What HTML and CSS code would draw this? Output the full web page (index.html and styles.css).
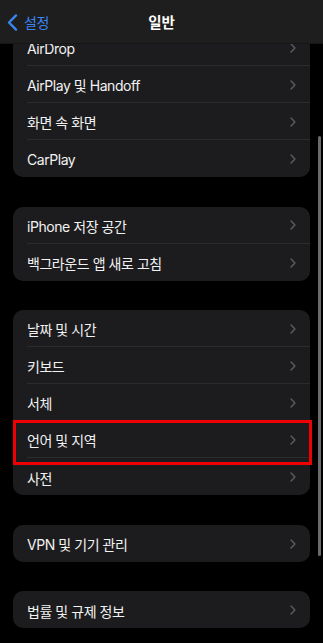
FILE: index.html
```html
<!DOCTYPE html>
<html lang="ko">
<head>
<meta charset="utf-8">
<title>일반</title>
<link rel="stylesheet" href="styles.css">
</head>
<body>
<div class="screen">
  <main class="content">
    <section class="group">
      <div class="row"><div class="row-inner"><span class="label">AirDrop</span><svg class="chev" viewBox="0 0 7 12"><path d="M1.2 1.2 5.8 6 1.2 10.8"/></svg></div></div>
      <div class="row"><div class="row-inner"><span class="label">AirPlay 및 Handoff</span><svg class="chev" viewBox="0 0 7 12"><path d="M1.2 1.2 5.8 6 1.2 10.8"/></svg></div></div>
      <div class="row"><div class="row-inner"><span class="label">화면 속 화면</span><svg class="chev" viewBox="0 0 7 12"><path d="M1.2 1.2 5.8 6 1.2 10.8"/></svg></div></div>
      <div class="row"><div class="row-inner"><span class="label">CarPlay</span><svg class="chev" viewBox="0 0 7 12"><path d="M1.2 1.2 5.8 6 1.2 10.8"/></svg></div></div>
    </section>
    <section class="group">
      <div class="row"><div class="row-inner"><span class="label">iPhone 저장 공간</span><svg class="chev" viewBox="0 0 7 12"><path d="M1.2 1.2 5.8 6 1.2 10.8"/></svg></div></div>
      <div class="row"><div class="row-inner"><span class="label">백그라운드 앱 새로 고침</span><svg class="chev" viewBox="0 0 7 12"><path d="M1.2 1.2 5.8 6 1.2 10.8"/></svg></div></div>
    </section>
    <section class="group">
      <div class="row"><div class="row-inner"><span class="label">날짜 및 시간</span><svg class="chev" viewBox="0 0 7 12"><path d="M1.2 1.2 5.8 6 1.2 10.8"/></svg></div></div>
      <div class="row"><div class="row-inner"><span class="label">키보드</span><svg class="chev" viewBox="0 0 7 12"><path d="M1.2 1.2 5.8 6 1.2 10.8"/></svg></div></div>
      <div class="row"><div class="row-inner"><span class="label">서체</span><svg class="chev" viewBox="0 0 7 12"><path d="M1.2 1.2 5.8 6 1.2 10.8"/></svg></div></div>
      <div class="row row-highlight"><div class="row-inner"><span class="label">언어 및 지역</span><svg class="chev" viewBox="0 0 7 12"><path d="M1.2 1.2 5.8 6 1.2 10.8"/></svg></div></div>
      <div class="row"><div class="row-inner"><span class="label">사전</span><svg class="chev" viewBox="0 0 7 12"><path d="M1.2 1.2 5.8 6 1.2 10.8"/></svg></div></div>
    </section>
    <section class="group">
      <div class="row"><div class="row-inner"><span class="label">VPN 및 기기 관리</span><svg class="chev" viewBox="0 0 7 12"><path d="M1.2 1.2 5.8 6 1.2 10.8"/></svg></div></div>
    </section>
    <section class="group">
      <div class="row"><div class="row-inner"><span class="label">법률 및 규제 정보</span><svg class="chev" viewBox="0 0 7 12"><path d="M1.2 1.2 5.8 6 1.2 10.8"/></svg></div></div>
    </section>
  </main>

  <header class="navbar">
    <div class="back">
      <svg class="back-chev" viewBox="0 0 11 17"><path d="M9 1.4 2 8.5l7 7.1"/></svg>
      <span class="back-label">설정</span>
    </div>
    <h1 class="title">일반</h1>
  </header>

  <div class="scrollbar"></div>
</div>
</body>
</html>
```

FILE: styles.css
```css
* { box-sizing: border-box; }

html, body {
  margin: 0;
  padding: 0;
  background: #000;
}

body {
  font-family: "Inter", "Noto Sans CJK KR", sans-serif;
  color: #f2f2f2;
  -webkit-font-smoothing: antialiased;
}

.screen {
  position: relative;
  width: 323px;
  height: 643px;
  overflow: hidden;
  background: #000;
}

.content {
  padding: 29px 13px 0 13px;
  display: flex;
  flex-direction: column;
  gap: 29.5px;
}

.group {
  background: #1c1c1e;
  border-radius: 10px;
  display: flex;
  flex-direction: column;
}

.row {
  position: relative;
  height: 37px;
  padding-left: 14px;
  display: flex;
}

.row-inner {
  flex: 1;
  display: flex;
  align-items: center;
  justify-content: space-between;
  padding-top: 2px;
  padding-right: 14px;
  border-bottom: 1px solid #2c2c2e;
}

.row:last-child .row-inner {
  border-bottom: none;
}

.label {
  font-size: 14px;
  letter-spacing: -0.45px;
  white-space: nowrap;
}

.chev {
  width: 6px;
  height: 10px;
  margin-top: -1px;
  fill: none;
  stroke: #5c5c60;
  stroke-width: 1.7;
  stroke-linecap: round;
  stroke-linejoin: round;
}

.row-highlight::after {
  content: "";
  position: absolute;
  top: -1px;
  left: 0;
  right: -2px;
  bottom: -7px;
  border: 3px solid #f00000;
  z-index: 2;
  pointer-events: none;
}

.navbar {
  position: absolute;
  top: 0;
  left: 0;
  right: 0;
  height: 44px;
  background: #1e1e1e;
  border-bottom: 1px solid #161616;
  display: flex;
  align-items: center;
  justify-content: center;
}

.back {
  position: absolute;
  left: 7px;
  top: 0;
  height: 44px;
  display: flex;
  align-items: center;
  gap: 6px;
  color: #3a86f6;
}

.back-chev {
  width: 11px;
  height: 17px;
  fill: none;
  stroke: #3a86f6;
  stroke-width: 2.3;
  stroke-linecap: round;
  stroke-linejoin: round;
}

.back-label {
  font-size: 14px;
  letter-spacing: -0.3px;
}

.title {
  margin: 0;
  font-size: 14.5px;
  font-weight: 600;
  color: #fff;
}

.scrollbar {
  position: absolute;
  left: 318px;
  top: 136px;
  width: 3px;
  height: 420px;
  border-radius: 2px;
  background: #6a6a6a;
}
```
